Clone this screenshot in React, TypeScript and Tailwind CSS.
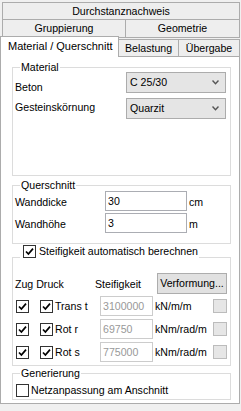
import React from 'react';

const Check = () => (
  <svg width="9" height="9" viewBox="0 0 9 9" className="block">
    <path d="M1 4.5 L3.4 7 L8 1.6" fill="none" stroke="#000" strokeWidth="1.7" />
  </svg>
);

function CheckBox({ checked }: { checked?: boolean }) {
  return (
    <div className="flex h-[13px] w-[13px] shrink-0 items-center justify-center border border-[#333333] bg-white">
      {checked && <Check />}
    </div>
  );
}

function Combo({ value }: { value: string }) {
  return (
    <div className="flex h-[21px] w-[100px] items-center justify-between border border-[#acacac] bg-[#e5e5e5] pl-[3px] pr-[6px]">
      <span>{value}</span>
      <svg width="7" height="5" viewBox="0 0 7 5">
        <path d="M0.5 0.5 L3.5 3.8 L6.5 0.5" fill="none" stroke="#555" strokeWidth="1.4" />
      </svg>
    </div>
  );
}

function GroupBox({ title, className, children }: { title: React.ReactNode; className: string; children?: React.ReactNode }) {
  return (
    <div className={`relative ml-[11px] w-[219px] border border-[#dcdcdc] ${className}`}>
      <div className="absolute left-[7px] top-[-7px] bg-white px-px">{title}</div>
      {children}
    </div>
  );
}

const rows = [
  { label: 'Trans t', value: '3100000', unit: 'kN/m/m' },
  { label: 'Rot r', value: '69750', unit: 'kNm/rad/m' },
  { label: 'Rot s', value: '775000', unit: 'kNm/rad/m' },
];

export default function App() {
  return (
    <div className="h-[411px] w-[241px] overflow-hidden bg-[#f0f0f0] font-['Liberation_Sans',Arial,sans-serif] text-[10.6px] leading-[13px] text-black">
      {/* Tabs */}
      <div className="ml-[2px] mt-[2px] flex h-[18px] w-[238px] items-center justify-center border border-[#acacac] bg-[#eeeeee]">
        Durchstanznachweis
      </div>
      <div className="-mt-px ml-[2px] flex h-[19px] w-[238px]">
        <div className="flex w-[124px] items-center justify-center border border-[#acacac] bg-[#eeeeee]">Gruppierung</div>
        <div className="-ml-px flex flex-1 items-center justify-center border border-[#acacac] bg-[#eeeeee]">Geometrie</div>
      </div>
      <div className="relative z-10 -mt-[2px] flex h-[20px] items-end">
        <div className="flex h-[21px] w-[119px] self-start border border-b-0 border-[#acacac] bg-white pl-[7px] pt-[3px] text-[11px]">
          Material / Querschnitt
        </div>
        <div className="flex h-[17px] w-[60px] items-center justify-center border border-b-0 border-l-0 border-[#acacac] bg-[#eeeeee]">
          Belastung
        </div>
        <div className="flex h-[17px] w-[61px] items-center justify-center border border-b-0 border-l-0 border-[#acacac] bg-[#eeeeee]">
          Übergabe
        </div>
      </div>

      {/* Panel */}
      <div className="h-[348px] w-[240px] border border-[#acacac] bg-white">
        <GroupBox title="Material" className="mt-[10px] h-[109px]">
          <div className="mt-[4px] flex">
            <div className="w-[113px] pl-[2px] pt-[9px]">Beton</div>
            <Combo value="C 25/30" />
          </div>
          <div className="mt-[4px] flex">
            <div className="w-[113px] pl-[2px] pt-[3px]">Gesteinskörnung</div>
            <Combo value="Quarzit" />
          </div>
        </GroupBox>

        <GroupBox title="Querschnitt" className="mt-[9px] h-[59px]">
          {[
            ['Wanddicke', '30', 'cm'],
            ['Wandhöhe', '3', 'm'],
          ].map(([l, v, u], i) => (
            <div key={l} className={`flex items-center ${i === 0 ? 'mt-[5px]' : 'mt-[2px]'}`}>
              <div className="w-[92px] pl-[2px] pt-[2px]">{l}</div>
              <div className="flex h-[20px] w-[82px] items-center border border-[#abadb3] pl-[2px]">{v}</div>
              <div className="ml-[2px] pt-[2px]">{u}</div>
            </div>
          ))}
        </GroupBox>

        <GroupBox
          title={
            <div className="flex items-center gap-[3px] pl-[2px]">
              <CheckBox checked />
              <span>Steifigkeit automatisch berechnen</span>
            </div>
          }
          className="mt-[13px] h-[109px] [&>div:first-child]:top-[-13px]"
        >
          <div className="mt-[15px] flex h-[21px] items-center">
            <div className="w-[82px] pl-[2px] pt-[2px]">Zug Druck</div>
            <div className="w-[62px] pt-[2px]">Steifigkeit</div>
            <div className="flex h-[21px] w-[70px] items-center justify-center border border-[#adadad] bg-[#e1e1e1]">
              Verformung...
            </div>
          </div>
          {rows.map((r, i) => (
            <div key={r.label} className={`flex h-[20px] items-center ${i === 0 ? 'mt-[2px]' : 'mt-[3px]'}`}>
              <div className="w-[27px] pl-[3px]">
                <CheckBox checked />
              </div>
              <div className="flex w-[60px] items-center">
                <CheckBox checked />
                <span className="ml-[2px] pt-px">{r.label}</span>
              </div>
              <div className="flex h-[20px] w-[53px] items-center border border-[#cccccc] pl-[2px] text-[#999999]">
                {r.value}
              </div>
              <div className="ml-[2px] w-[58px] pt-px">{r.unit}</div>
              <div className="h-[14px] w-[14px] border border-[#bcbcbc] bg-[#e6e6e6]" />
            </div>
          ))}
        </GroupBox>

        <GroupBox title="Generierung" className="mt-[7px] h-[27px]">
          <div className="mt-[10px] flex items-center pl-[3px]">
            <CheckBox />
            <span className="ml-[2px]">Netzanpassung am Anschnitt</span>
          </div>
        </GroupBox>
      </div>
    </div>
  );
}
